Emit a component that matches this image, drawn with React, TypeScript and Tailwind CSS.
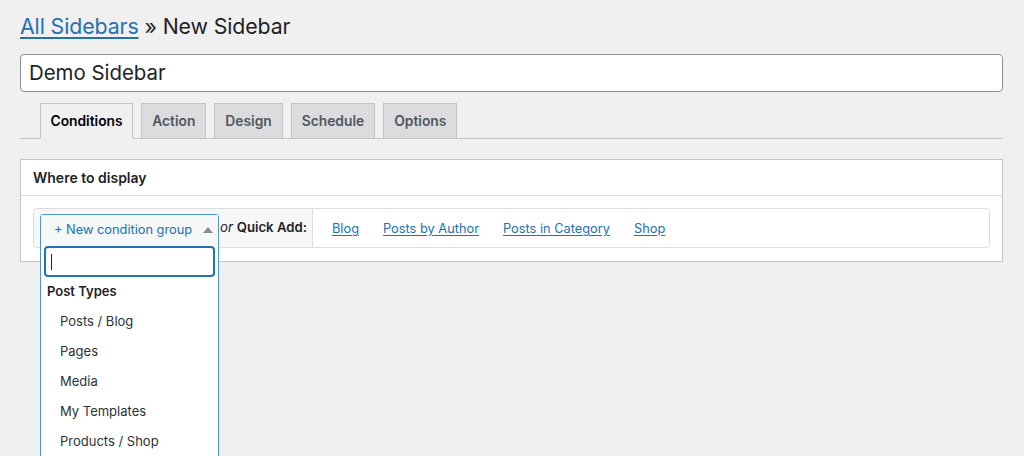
import React from 'react'

const tabs = ['Conditions', 'Action', 'Design', 'Schedule', 'Options']
const quickLinks = ['Blog', 'Posts by Author', 'Posts in Category', 'Shop']
const postTypes = ['Posts / Blog', 'Pages', 'Media', 'My Templates', 'Products / Shop']

function ConditionDropdown() {
  return (
    <div className="absolute left-[6px] top-[5px] w-[179px] h-[260px] bg-white border border-[#4f94d4] rounded-t-[3px] z-10">
      {/* toggle */}
      <div className="h-[30px] flex items-center justify-between pl-[13px] pr-[4px] bg-[#f6f7f7] text-[12.8px] text-[#2271b1]">
        <span>+ New condition group</span>
        <svg width="10" height="6" viewBox="0 0 10 6" className="mr-[1px]">
          <path d="M0 6 L5 0 L10 6 Z" fill="#8c8f94" />
        </svg>
      </div>
      {/* search */}
      <div className="px-[3px] pt-[1px]">
        <div className="h-[31px] border-2 border-[#2271b1] rounded-[4px] flex items-center pl-[5px]">
          <div className="w-px h-[16px] bg-[#1d2327]" />
        </div>
      </div>
      <div className="pl-[6px] h-[29px] leading-[28px] text-[13px] font-semibold text-[#1d2327]">
        Post Types
      </div>
      <ul>
        {postTypes.map((p) => (
          <li key={p} className="pl-[19px] h-[30px] leading-[30px] text-[13px] text-[#2c3338]">
            {p}
          </li>
        ))}
      </ul>
    </div>
  )
}

export default function App() {
  return (
    <div
      className="h-[456px] overflow-hidden bg-[#f0f0f1] pl-[20px] pr-[21px]"
      style={{ fontFamily: 'Inter, "Noto Sans", sans-serif' }}
    >
      <h1 className="pt-[10px] h-[44px] text-[21.3px] leading-[32px] text-[#1d2327] tracking-[-0.1px]">
        <a href="#" className="text-[#2271b1] underline underline-offset-[3px]">All Sidebars</a>
        {' » New Sidebar'}
      </h1>

      {/* title input */}
      <div className="mt-[10px] h-[38px] bg-white border border-[#8c8f94] rounded-[4px] flex items-center pl-[8px] text-[20.4px] text-[#1d2327]">
        Demo Sidebar
      </div>

      {/* tabs */}
      <div className="mt-[11px] flex gap-[8px] pl-[20px] border-b border-[#c3c4c7] h-[36px] items-end">
        {tabs.map((t, i) =>
          i === 0 ? (
            <div
              key={t}
              className="h-[36px] -mb-px px-[9.5px] pt-[1px] flex items-center bg-[#f0f0f1] border border-[#c3c4c7] border-b-[#f0f0f1] text-[13.8px] font-semibold text-black"
            >
              {t}
            </div>
          ) : (
            <div
              key={t}
              className="h-[35px] px-[10px] pt-[1px] flex items-center bg-[#dcdcde] border border-b-0 border-[#c3c4c7] text-[13.8px] font-semibold text-[#50575e]"
            >
              {t}
            </div>
          )
        )}
      </div>

      {/* panel */}
      <div className="mt-[20px] bg-white border border-[#c3c4c7]">
        <div className="h-[36px] flex items-center px-[12px] border-b border-[#dcdcde] text-[14px] font-semibold text-[#1d2327]">
          Where to display
        </div>
        <div className="px-[12px] pt-[12px] pb-[13px]">
          <div className="relative h-[40px] flex border border-[#dcdcde] rounded-[4px] bg-white">
            <div className="relative w-[279px] bg-[#f6f7f7] border-r border-[#dcdcde] rounded-l-[4px] flex items-center justify-end pr-[5px] text-[13.2px] text-[#1d2327]">
              <ConditionDropdown />
              <span>
                <i>or</i> <b className="font-semibold">Quick Add:</b>
              </span>
            </div>
            <div className="flex items-center pl-[19px] gap-[24px] pt-[1px] text-[12.8px] text-[#2271b1]">
              {quickLinks.map((l) => (
                <a key={l} href="#" className="underline underline-offset-[2px]">
                  {l}
                </a>
              ))}
            </div>
          </div>
        </div>
      </div>
    </div>
  )
}
